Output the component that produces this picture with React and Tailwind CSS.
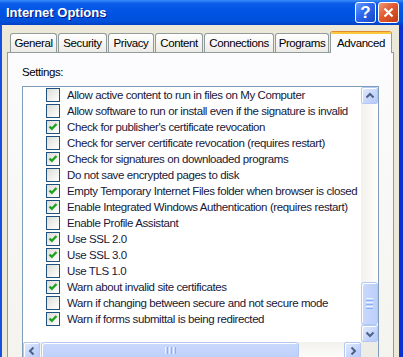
import React from "react";

const items = [
  ["Allow active content to run in files on My Computer", false],
  ["Allow software to run or install even if the signature is invalid", false],
  ["Check for publisher's certificate revocation", true],
  ["Check for server certificate revocation (requires restart)", false],
  ["Check for signatures on downloaded programs", true],
  ["Do not save encrypted pages to disk", false],
  ["Empty Temporary Internet Files folder when browser is closed", true],
  ["Enable Integrated Windows Authentication (requires restart)", true],
  ["Enable Profile Assistant", false],
  ["Use SSL 2.0", true],
  ["Use SSL 3.0", true],
  ["Use TLS 1.0", false],
  ["Warn about invalid site certificates", true],
  ["Warn if changing between secure and not secure mode", false],
  ["Warn if forms submittal is being redirected", true],
];

const tabs = [
  ["General", "w-[47px]"],
  ["Security", "w-[49px]"],
  ["Privacy", "w-[46px]"],
  ["Content", "w-[48px]"],
  ["Connections", "w-[70px]"],
  ["Programs", "w-[54px]"],
];

function Checkbox({ checked }) {
  return (
    <div className="w-[14px] h-[14px] shrink-0 border border-[#1C5180] bg-[linear-gradient(135deg,#DCDCD7,#FFFFFF)] flex items-center justify-center">
      {checked && (
        <svg width="12" height="12" viewBox="0 0 12 12">
          <polyline points="2.5,5.5 4.8,7.8 9.5,3" fill="none" stroke="#21A121" strokeWidth="2.4" />
        </svg>
      )}
    </div>
  );
}

function SBtn({ dir }) {
  const pts = {
    up: "4.5,9.5 8,6 11.5,9.5",
    down: "4.5,6.5 8,10 11.5,6.5",
    left: "9.5,4.5 6,8 9.5,11.5",
    right: "6.5,4.5 10,8 6.5,11.5",
  }[dir];
  return (
    <div className="w-[17px] h-[17px] shrink-0 rounded-[2px] border border-[#B4C8F6] bg-[linear-gradient(135deg,#E3EBFE,#C4D5FC_60%,#B6CAF8)] shadow-[inset_1px_1px_0_#FFFFFF] flex items-center justify-center">
      <svg width="15" height="15" viewBox="0 0 15 15" className="-ml-[1px] -mt-[1px]">
        <polyline points={pts} fill="none" stroke="#4D6185" strokeWidth="2" />
      </svg>
    </div>
  );
}

export default function App() {
  return (
    <div className="w-[403px] h-[357px] overflow-hidden flex flex-col bg-[#ECE9D8] font-['Liberation_Sans',Arial,sans-serif] text-[11.5px] tracking-[-0.4px]">
      {/* Title bar */}
      <div className="h-[25px] shrink-0 flex items-center justify-between pl-[6px] pr-[4px] bg-[linear-gradient(to_bottom,#3D8BF8_0%,#0A5CE8_14%,#0054E3_50%,#0050DA_86%,#0040C4_100%)]">
        <span className="text-white font-bold text-[13px] tracking-normal [text-shadow:1px_1px_0_#0A1883]">Internet Options</span>
        <div className="flex gap-[2px]">
          <div className="w-[21px] h-[21px] rounded-[3px] border border-white bg-[linear-gradient(135deg,#6A9DFD,#2B66F0_45%,#1747C4)] flex items-center justify-center">
            <span className="text-white font-bold text-[17px] leading-none tracking-normal">?</span>
          </div>
          <div className="w-[21px] h-[21px] rounded-[3px] border border-white bg-[linear-gradient(135deg,#EE9A7A,#E05A30_45%,#C23A14)] flex items-center justify-center">
            <svg width="13" height="13" viewBox="0 0 13 13">
              <path d="M2.5 2.5 L10.5 10.5 M10.5 2.5 L2.5 10.5" stroke="white" strokeWidth="2.2" />
            </svg>
          </div>
        </div>
      </div>

      {/* Body */}
      <div className="flex-1 flex min-h-0">
        <div className="w-[2px] shrink-0 bg-[#1650E3]" />
        <div className="flex-1 flex flex-col px-[5px] pt-[6px] min-w-0">
          {/* Tabs */}
          <div className="h-[21px] shrink-0 flex items-end pl-[3px]">
            {tabs.map(([t, w]) => (
              <div
                key={t}
                className={`${w} mr-[1px] h-[19px] shrink-0 border border-b-0 border-[#919B9C] rounded-t-[3px] bg-[linear-gradient(to_bottom,#FFFFFF,#ECEBE6)] flex items-center justify-center text-black pt-[1px]`}
              >
                {t}
              </div>
            ))}
            <div className="w-[62px] h-[22px] -mb-[1px] relative z-10 shrink-0 border-x border-t border-x-[#919B9C] border-t-[#E68B2C] rounded-t-[3px] bg-[#FCFCFE] flex flex-col">
              <div className="h-[2px] bg-[#FFC73C] rounded-t-[2px]" />
              <div className="flex-1 flex items-start justify-center text-black pt-[1px]">Advanced</div>
            </div>
          </div>

          {/* Panel */}
          <div className="flex-1 border border-[#919B9C] bg-[linear-gradient(to_bottom,#FCFCFE,#F4F3EE)] pl-[14px] pt-[13px]">
            <div className="leading-[13px] text-black mb-[7px]">Settings:</div>
            <div className="w-[357px] h-[274px] border border-[#7F9DB9] bg-white flex flex-col">
              <div className="h-[255px] flex">
                <div className="flex-1 overflow-hidden">
                  {items.map(([label, checked]) => (
                    <div key={label} className="h-[16px] flex items-center pl-[23px]">
                      <Checkbox checked={checked} />
                      <span className="ml-[7px] whitespace-nowrap text-[#181838] leading-[13px]">{label}</span>
                    </div>
                  ))}
                </div>
                {/* vertical scrollbar */}
                <div className="w-[17px] flex flex-col bg-[linear-gradient(to_right,#F3F1EC,#FEFEFB)]">
                  <SBtn dir="up" />
                  <div className="flex-1" />
                  <div className="h-[43px] rounded-[3px] border border-[#B4C8F6] bg-[linear-gradient(to_right,#CAD9FD,#BCD0FB)] shadow-[inset_1px_1px_0_#FFFFFF] flex flex-col items-center justify-center gap-[1px]">
                    <div className="w-[7px] h-[1px] bg-[#EEF4FE]" />
                    <div className="w-[7px] h-[1px] bg-[#8CB0F8]" />
                    <div className="w-[7px] h-[1px] bg-[#EEF4FE]" />
                    <div className="w-[7px] h-[1px] bg-[#8CB0F8]" />
                    <div className="w-[7px] h-[1px] bg-[#EEF4FE]" />
                    <div className="w-[7px] h-[1px] bg-[#8CB0F8]" />
                  </div>
                  <SBtn dir="down" />
                </div>
              </div>
              {/* horizontal scrollbar */}
              <div className="h-[17px] flex">
                <div className="flex-1 flex bg-[linear-gradient(to_bottom,#F3F1EC,#FEFEFB)]">
                  <SBtn dir="left" />
                  <div className="ml-[1px] w-[258px] h-[17px] rounded-[3px] border border-[#B4C8F6] bg-[linear-gradient(to_bottom,#CAD9FD,#BCD0FB)] shadow-[inset_1px_1px_0_#FFFFFF] flex items-center justify-center gap-[1px]">
                    <div className="w-[1px] h-[7px] bg-[#EEF4FE]" />
                    <div className="w-[1px] h-[7px] bg-[#8CB0F8]" />
                    <div className="w-[1px] h-[7px] bg-[#EEF4FE]" />
                    <div className="w-[1px] h-[7px] bg-[#8CB0F8]" />
                    <div className="w-[1px] h-[7px] bg-[#EEF4FE]" />
                    <div className="w-[1px] h-[7px] bg-[#8CB0F8]" />
                  </div>
                  <div className="flex-1" />
                  <SBtn dir="right" />
                </div>
                <div className="w-[17px] bg-[#EEEDE5]" />
              </div>
            </div>
          </div>
        </div>
        <div className="w-[4px] shrink-0 bg-[#0A32D2]" />
      </div>
    </div>
  );
}
